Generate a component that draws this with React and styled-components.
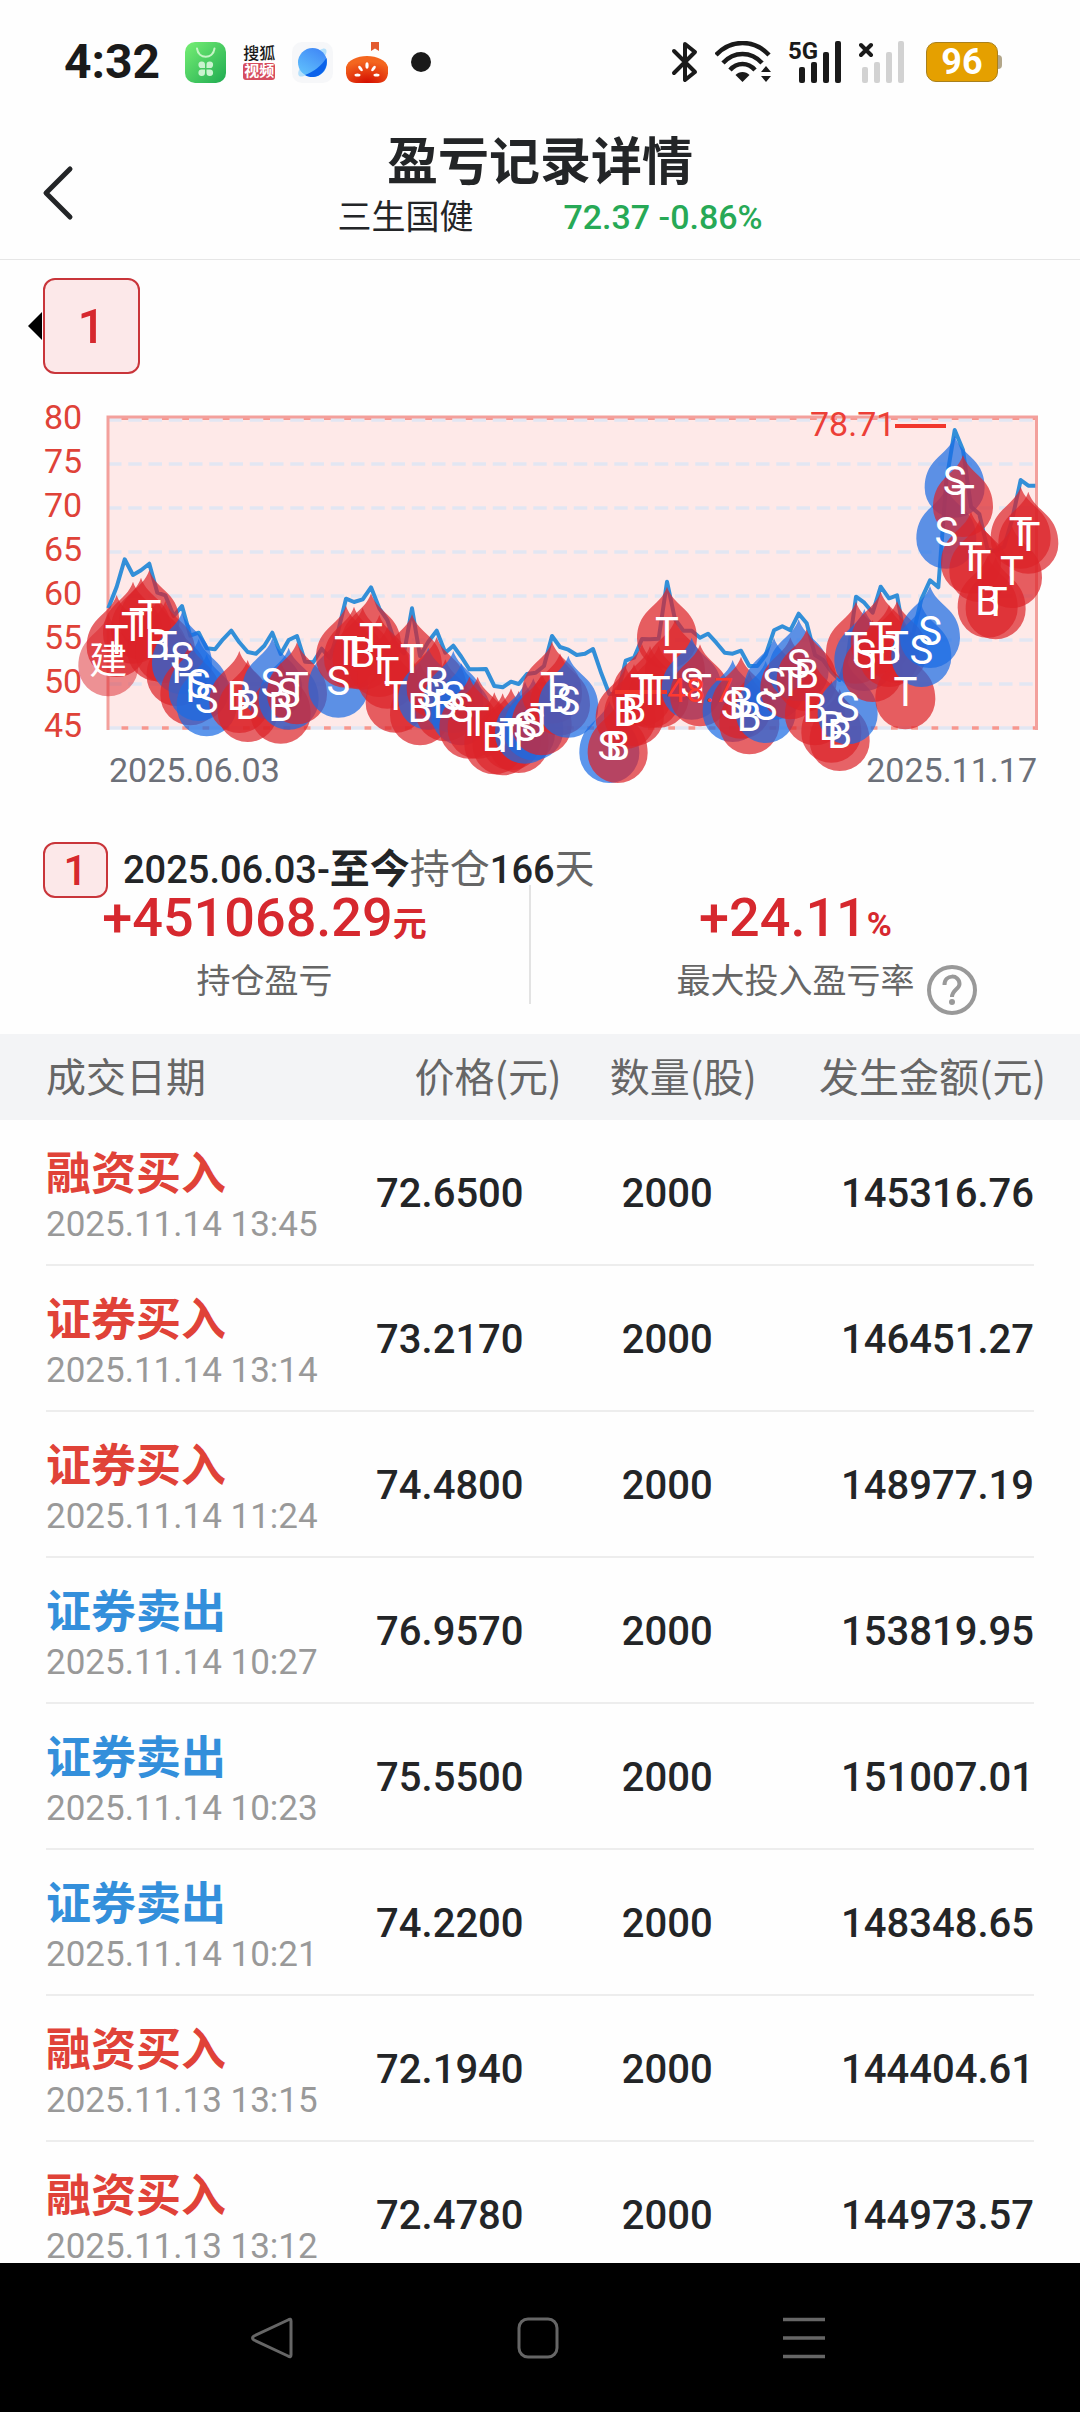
import React from "react";
import styled, { createGlobalStyle } from "styled-components";

const Global = createGlobalStyle`
  * { box-sizing: border-box; }
  body { margin: 0; background: #fdfdfd; }
  button { border: 0; padding: 0; background: none; font: inherit; color: inherit; cursor: pointer; }
  svg { display: block; }
`;

const Screen = styled.div`
  display: flex;
  flex-direction: column;
  width: 100%;
  height: 100vh;
  overflow: hidden;
  background: #fefefe;
  color: #232527;
  font-family: Roboto, "Noto Sans CJK SC", sans-serif;
`;

/* Status bar */
const StatusBar = styled.div`
  display: flex;
  align-items: center;
  justify-content: space-between;
  height: 124px;
  flex: none;
  padding: 0 78px 0 64px;
  color: #1a1a1a;
`;
const StatusGroup = styled.div`
  display: flex;
  align-items: center;
  gap: ${(p) => p.$gap}px;
`;
const Clock = styled.time`
  font-size: 48px;
  line-height: 56px;
  font-weight: 700;
  margin-right: 12px;
`;
const SohuIcon = styled.span`
  display: flex;
  flex-direction: column;
  align-items: center;
  width: 40px;
  font-size: 16px;
  line-height: 18px;
  font-weight: 500;
`;
const SohuTag = styled.span`
  padding: 0 1px;
  border-radius: 3px;
  background: #d64d5e;
  color: #fff;
  font-size: 15px;
  line-height: 17px;
  font-weight: 700;
`;
const Signal = styled.span`
  position: relative;
  display: block;
`;
const Generation = styled.span`
  position: absolute;
  left: 0;
  top: -2px;
  font-size: 24px;
  line-height: 24px;
  font-weight: 700;
`;
const Battery = styled.span`
  display: flex;
  align-items: center;
  margin-left: 4px;

  &::after {
    content: "";
    width: 4px;
    height: 14px;
    border-radius: 0 4px 4px 0;
    background: #b3a78a;
  }
`;
const BatteryLevel = styled.span`
  width: 72px;
  height: 40px;
  border: 1px solid #a9801c;
  border-radius: 10px;
  background: #e5a000;
  color: #fff;
  font-size: 36px;
  line-height: 38px;
  font-weight: 700;
  text-align: center;
`;

/* Header */
const Header = styled.header`
  display: grid;
  grid-template-columns: 110px 1fr 110px;
  flex: none;
  height: 136px;
  border-bottom: 1px solid #e6e6e6;
`;
const BackButton = styled.button`
  display: flex;
  align-items: center;
  padding: 3px 0 0 42px;
`;
const Heading = styled.div`
  display: flex;
  flex-direction: column;
  align-items: center;
  padding-top: 9px;
`;
const Title = styled.h1`
  margin: 0;
  font-size: 51px;
  line-height: 60px;
  font-weight: 700;
`;
const Quote = styled.p`
  display: flex;
  align-items: baseline;
  gap: 90px;
  margin: 0;
  padding-left: 20px;
  font-size: 34px;
  line-height: 48px;
`;
const Change = styled.span`
  color: #27a956;
  font-weight: 500;
`;

/* Chart */
const TabStrip = styled.div`
  display: flex;
  align-items: center;
  flex: none;
  padding: 18px 0 18px 28px;
`;
const Tab = styled.button`
  width: 97px;
  height: 96px;
  border: 2px solid #c9353a;
  border-radius: 12px;
  background: #fce8e9;
  color: #d6282e;
  font-size: 49px;
  font-weight: 500;
`;
const Chart = styled.svg`
  flex: none;
  width: 100%;
  height: auto;
`;

/* Position summary */
const Period = styled.div`
  display: flex;
  align-items: flex-start;
  flex: none;
  padding: 42px 43px 0;
  margin-bottom: -13px;
`;
const PeriodBadge = styled.span`
  width: 65px;
  height: 56px;
  border: 2px solid #c9353a;
  border-radius: 12px;
  background: #fce8e9;
  color: #d6282e;
  font-size: 42px;
  line-height: 54px;
  font-weight: 500;
  text-align: center;
`;
const PeriodText = styled.p`
  display: flex;
  align-items: baseline;
  margin: 0;
  padding-left: 15px;
  font-size: 38px;
  line-height: 56px;
  font-weight: 500;
`;
const Strong = styled.b`
  font-size: 40px;
  font-weight: 700;
`;
const Muted = styled.span`
  color: #666;
  font-size: 40px;
  font-weight: 400;
`;
const Stats = styled.section`
  display: grid;
  grid-template-columns: 1fr 2px 1fr;
  flex: none;
  height: 149px;
  padding-right: 20px;
`;
const Divider = styled.span`
  height: 119px;
  background: #e3e3e3;
`;
const Stat = styled.div`
  display: flex;
  flex-direction: column;
`;
const StatValue = styled.strong`
  color: #d6282e;
  font-size: 54px;
  line-height: 66px;
  font-weight: 500;
  text-align: center;
`;
const Unit = styled.span`
  font-size: 34px;
  font-weight: 700;
`;
const StatLabel = styled.div`
  display: grid;
  grid-template-columns: 1fr auto 1fr;
  gap: 12px;
  color: #666;
  font-size: 34px;
  line-height: 48px;
`;
const LabelText = styled.span`
  grid-column: 2;
`;
const HelpButton = styled.button`
  justify-self: start;
  align-self: start;
  padding-top: 8px;
`;

/* Trades */
const Trades = styled.main`
  flex: 1;
  min-height: 0;
  overflow: hidden;
`;
const Table = styled.table`
  width: 100%;
  table-layout: fixed;
  border-collapse: collapse;
`;
const Col = styled.col`
  width: ${(p) => p.$w}%;
`;
const HeadCell = styled.th`
  height: 86px;
  padding: 0 ${(p) => p.$end || 0}px 4px ${(p) => p.$start || 0}px;
  background: #f3f4f6;
  color: #666;
  font-family: "Noto Sans CJK SC", sans-serif;
  font-size: 40px;
  line-height: 60px;
  font-weight: 400;
  text-align: ${(p) => (p.$start ? "left" : "right")};
  white-space: nowrap;
`;
const Row = styled.tr`
  background: linear-gradient(#ededed, #ededed) 46px 100% / calc(100% - 92px) 2px no-repeat;
`;
const TypeCell = styled.td`
  height: 146px;
  padding: 8px 0 0 46px;
  white-space: nowrap;
`;
const TradeType = styled.div`
  color: ${(p) => (p.$sell ? "#338fdb" : "#e04238")};
  font-size: 45px;
  line-height: 56px;
  font-weight: 700;
`;
const TradeTime = styled.div`
  color: #999;
  font-size: 35px;
  line-height: 44px;
`;
const NumberCell = styled.td`
  padding: 2px ${(p) => p.$end}px 0 0;
  font-size: 40px;
  line-height: 48px;
  font-weight: 500;
  text-align: right;
`;

/* System navigation */
const NavBar = styled.nav`
  display: grid;
  grid-template-columns: repeat(3, 266px);
  justify-content: center;
  flex: none;
  height: 149px;
  padding-right: 4px;
  background: #000;
`;
const NavButton = styled.button`
  display: flex;
  align-items: center;
  justify-content: center;
`;

const trades = [
  ["融资买入", "2025.11.14 13:45", "72.6500", "2000", "145316.76"],
  ["证券买入", "2025.11.14 13:14", "73.2170", "2000", "146451.27"],
  ["证券买入", "2025.11.14 11:24", "74.4800", "2000", "148977.19"],
  ["证券卖出", "2025.11.14 10:27", "76.9570", "2000", "153819.95"],
  ["证券卖出", "2025.11.14 10:23", "75.5500", "2000", "151007.01"],
  ["证券卖出", "2025.11.14 10:21", "74.2200", "2000", "148348.65"],
  ["融资买入", "2025.11.13 13:15", "72.1940", "2000", "144404.61"],
  ["融资买入", "2025.11.13 13:12", "72.4780", "2000", "144973.57"],
];

/* Daily closes and trade marks, in thirds of a chart unit, measured from the chart's top edge */
const closes = [
  [325, 655], [350, 590], [374, 508], [399, 555], [423, 541], [448, 521], [472, 608], [496, 616],
  [521, 678], [546, 648], [571, 737], [596, 728], [620, 775], [645, 778], [669, 748], [694, 722],
  [718, 757], [743, 786], [768, 791], [793, 767], [817, 728], [842, 792], [866, 750], [891, 738],
  [915, 815], [940, 817], [965, 776], [990, 805], [1014, 725], [1038, 626], [1062, 636], [1088, 628],
  [1113, 592], [1138, 655], [1162, 690], [1187, 765], [1212, 790], [1236, 655], [1260, 798], [1285, 755],
  [1310, 722], [1336, 788], [1360, 767], [1384, 800], [1408, 838], [1433, 838], [1458, 837], [1483, 888],
  [1508, 892], [1533, 875], [1556, 882], [1581, 852], [1607, 848], [1632, 828], [1656, 738], [1680, 771],
  [1705, 779], [1730, 795], [1755, 791], [1779, 777], [1804, 850], [1828, 912], [1853, 912], [1877, 812],
  [1902, 803], [1926, 747], [1950, 748], [1976, 746], [2001, 575], [2025, 688], [2050, 722], [2075, 722],
  [2100, 743], [2124, 731], [2149, 758], [2174, 788], [2198, 791], [2223, 782], [2248, 828], [2272, 828],
  [2297, 795], [2322, 721], [2347, 709], [2371, 721], [2396, 671], [2420, 700], [2445, 795], [2469, 810],
  [2494, 845], [2519, 870], [2543, 800], [2568, 620], [2593, 638], [2618, 668], [2642, 590], [2667, 625],
  [2691, 616], [2716, 752], [2740, 730], [2764, 628], [2790, 571], [2815, 592], [2839, 273], [2864, 120],
  [2889, 180], [2913, 350], [2938, 372], [2963, 479], [2987, 484], [3012, 470], [3036, 390], [3062, 270],
  [3085, 287], [3106, 287],
];
const marks = [
  ["建", 325, 808], ["T", 350, 750], ["T", 399, 710], ["T", 423, 698], ["T", 448, 675], ["B", 472, 763],
  ["T", 496, 768], ["T", 530, 837], ["S", 546, 802], ["T", 571, 895], ["S", 596, 882], ["S", 620, 928],
  ["B", 718, 918], ["B", 743, 945], ["S", 817, 880], ["B", 842, 950], ["S", 866, 908], ["T", 891, 892],
  ["S", 1015, 872], ["T", 1038, 782], ["T", 1062, 785], ["B", 1088, 788], ["T", 1113, 745], ["T", 1138, 810],
  ["T", 1162, 845], ["T", 1187, 917], ["T", 1236, 808], ["B", 1260, 955], ["S", 1285, 908], ["B", 1310, 876],
  ["B", 1336, 943], ["S", 1360, 918], ["S", 1384, 955], ["T", 1408, 995], ["T", 1433, 995], ["B", 1483, 1042],
  ["T", 1508, 1045], ["T", 1533, 1030], ["T", 1556, 1038], ["S", 1575, 1010], ["S", 1600, 1000],
  ["T", 1625, 985], ["T", 1656, 890], ["B", 1680, 925], ["S", 1705, 932], ["S", 1828, 1068], ["B", 1853, 1068],
  ["B", 1877, 965], ["B", 1902, 957], ["T", 1926, 897], ["T", 1950, 903], ["T", 1976, 902], ["T", 2001, 725],
  ["T", 2025, 825], ["S", 2075, 878], ["T", 2100, 898], ["S", 2198, 945], ["B", 2223, 935], ["B", 2248, 982],
  ["S", 2297, 948], ["S", 2322, 878], ["T", 2371, 877], ["S", 2396, 823], ["B", 2420, 853], ["B", 2445, 955],
  ["B", 2494, 1007], ["B", 2519, 1032], ["S", 2543, 952], ["T", 2568, 770], ["S", 2593, 792], ["T", 2618, 825],
  ["T", 2642, 740], ["B", 2667, 780], ["T", 2691, 768], ["T", 2716, 907], ["S", 2764, 780], ["S", 2790, 723],
  ["S", 2839, 425], ["S", 2864, 272], ["T", 2889, 330], ["T", 2913, 500], ["T", 2938, 525], ["B", 2963, 632],
  ["T", 2987, 637], ["T", 3036, 543], ["T", 3062, 425], ["T", 3085, 440],
];
const DROP = "M0-45C3-35 11-29 19-21C26-14 30-5 30 7A30 30 0 0 1-30 7C-30-5-26-14-19-21C-11-29-3-35 0-45Z";
const levels = [80, 75, 70, 65, 60, 55, 50, 45];

function PriceChart() {
  const line = closes.map(([x, y]) => `${(x / 3).toFixed(1)},${(y / 3).toFixed(1)}`).join(" ");
  return (
    <Chart viewBox="0 2 1080 408" role="img" aria-label="盈亏走势" fontFamily='Roboto, "Noto Sans CJK SC", sans-serif'>
      <rect x="108" y="27" width="929" height="312" fill="#fee9e8" />
      {levels.map((v, i) => (
        <g key={v}>
          <line x1="108" x2="1036" y1={30 + i * 44} y2={30 + i * 44} stroke="#e2e6f2" strokeWidth="3.5" strokeDasharray="13.5 6.75" />
          <text x="44" y={39 + i * 44} fontSize="34" fill="#df4238">{v}</text>
        </g>
      ))}
      <line x1="121.5" x2="1036" y1="29" y2="29" stroke="#f6978f" strokeWidth="2" strokeDasharray="6.75 13.5" />
      <line x1="121.5" x2="1036" y1="338" y2="338" stroke="#f6978f" strokeWidth="3.5" strokeDasharray="6.75 13.5" />
      <path d="M108 340V27H1036.500V340" fill="none" stroke="#f3a09c" strokeWidth="3" />
      <polyline points={line} fill="none" stroke="#338fd8" strokeWidth="4" strokeLinejoin="round" />
      {marks.map(([kind, x, y]) => (
        <path
          key={x}
          d={DROP}
          transform={`translate(${x / 3} ${y / 3})`}
          fill={kind === "S" ? "#196be4" : "#dc2329"}
          fillOpacity={kind === "建" ? 0.5 : 0.71}
        />
      ))}
      <path d="M895 36H946M615 302H667" stroke="#f2372c" strokeWidth="4" />
      <g fill="#fff" textAnchor="middle">
        {marks.map(([kind, x, y]) => (
          <text key={x} x={x / 3} y={y / 3 + 14} fontSize={kind === "建" ? 38 : 40}>{kind}</text>
        ))}
      </g>
      <g fontSize="34">
        <text x="810" y="46" fill="#ec3f37">78.71</text>
        <text x="667" y="312" fill="#ff3a30">48.7</text>
      </g>
      <g fill="#6c7079" fontSize="34">
        <text x="109" y="392">2025.06.03</text>
        <text x="1037" y="392" textAnchor="end">2025.11.17</text>
      </g>
    </Chart>
  );
}

function StoreIcon() {
  return (
    <svg width="41" height="41" viewBox="0 0 41 41">
      <defs>
        <linearGradient id="store" x1="0" y1="0" x2="1" y2="1">
          <stop offset="0" stopColor="#76ef74" />
          <stop offset="1" stopColor="#1fab51" />
        </linearGradient>
      </defs>
      <rect width="41" height="41" rx="10" fill="url(#store)" />
      <path d="M12 6.500c1.500 11 16 11 17.500 0" fill="none" stroke="#c6f5c6" strokeWidth="2" strokeLinecap="round" />
      <g fill="#c9f3cf">
        <path d="M20 26h-3a3.300 3.300 0 1 1 3-3.300zM21.500 26h3a3.300 3.300 0 1 0-3-3.300zM20 27.500h-3a3.300 3.300 0 1 0 3 3.300zM21.500 27.500h3a3.300 3.300 0 1 1-3 3.300z" />
      </g>
    </svg>
  );
}

function BrowserIcon() {
  return (
    <svg width="41" height="41" viewBox="0 0 41 41">
      <defs>
        <linearGradient id="globe" x1=".8" y1="0" x2=".2" y2="1">
          <stop offset="0" stopColor="#3f86f6" />
          <stop offset="1" stopColor="#62c3fd" />
        </linearGradient>
      </defs>
      <rect width="41" height="41" rx="10" fill="#f6f7f9" />
      <path d="M28 8c6-4 9 0 4 8L14 33c-7 4-10 0-6-7z" fill="#b4e0fb" />
      <circle cx="20.500" cy="20.500" r="14.500" fill="url(#globe)" />
      <path d="M34.500 16C29 24 23 29 13 33c10 6 24-2 21.500-17z" fill="#0b62ea" />
    </svg>
  );
}

function TomatoIcon() {
  return (
    <svg width="42" height="41" viewBox="0 0 42 41">
      <defs>
        <radialGradient id="tomato" cx=".5" cy="1" r=".8">
          <stop offset="0" stopColor="#d40d00" />
          <stop offset="1" stopColor="#f4661f" />
        </radialGradient>
      </defs>
      <path d="M25 0h8v9l-4-2.500-4 2.500z" fill="#e35b2f" />
      <path d="M0 25C2 18 11 14 21 14s19 4 21 11c1 10-2 16-10 16H10C2 41-1 35 0 25z" fill="url(#tomato)" />
      <g fill="#fff">
        <ellipse cx="21" cy="23.500" rx="1.600" ry="3.200" />
        <ellipse cx="14.500" cy="26.500" rx="1.500" ry="3.200" transform="rotate(-35 14.500 26.500)" />
        <ellipse cx="27.500" cy="26.500" rx="1.500" ry="3.200" transform="rotate(35 27.500 26.500)" />
        <ellipse cx="11.500" cy="33" rx="3" ry="1.500" />
        <ellipse cx="30.500" cy="33" rx="3" ry="1.500" />
      </g>
    </svg>
  );
}

function Bars({ off }) {
  return (
    <svg width={off ? 46 : 54} height="42" viewBox={off ? "8 0 46 42" : "0 0 54 42"}>
      <g fill={off ? "#d2d2d2" : "#1a1a1a"}>
        <rect x="11" y="26" width="6" height="16" rx="2" />
        <rect x="23" y="21" width="6" height="21" rx="2" />
        <rect x="35" y="11" width="6" height="31" rx="2" />
        <rect x="47" y="0" width="6" height="42" rx="2" />
      </g>
      {off && <path d="M10 4L20 14M20 4L10 14" stroke="#1a1a1a" strokeWidth="4" strokeLinecap="round" />}
    </svg>
  );
}

export default function App() {
  return (
    <>
      <Global />
      <Screen>
        <StatusBar>
          <StatusGroup $gap={13}>
            <Clock>4:32</Clock>
            <StoreIcon />
            <SohuIcon>
              搜狐<SohuTag>视频</SohuTag>
            </SohuIcon>
            <BrowserIcon />
            <TomatoIcon />
            <svg width="32" height="20" viewBox="0 0 32 20">
              <circle cx="20" cy="10" r="10" fill="#1a1a1a" />
            </svg>
          </StatusGroup>
          <StatusGroup $gap={17}>
            <svg width="27" height="42" viewBox="0 0 27 42" fill="none" stroke="#1a1a1a" strokeWidth="4" strokeLinecap="round" strokeLinejoin="round">
              <path d="M3 10L24 31L14 39V3L24 11L3 32" />
            </svg>
            <svg width="56" height="42" viewBox="0 0 56 42" fill="none" stroke="#1a1a1a" strokeWidth="4.500">
              <path d="M1 14C16-2 39-2 54 14M8 22C19 10 36 10 47 22M15 29C22 21 33 21 40 29" />
              <path d="M27.500 41L20.500 34C24 30 31 30 34.500 34Z" fill="#1a1a1a" stroke="none" />
              <path d="M51 25L56 31H46ZM51 41L56 35H46Z" fill="#1a1a1a" stroke="none" />
            </svg>
            <Signal>
              <Generation>5G</Generation>
              <Bars />
            </Signal>
            <Bars off />
            <Battery>
              <BatteryLevel>96</BatteryLevel>
            </Battery>
          </StatusGroup>
        </StatusBar>

        <Header>
          <BackButton aria-label="返回">
            <svg width="32" height="56" viewBox="0 0 32 56" fill="none" stroke="#232527" strokeWidth="5" strokeLinecap="round" strokeLinejoin="round">
              <path d="M28 4L4 28L28 52" />
            </svg>
          </BackButton>
          <Heading>
            <Title>盈亏记录详情</Title>
            <Quote>
              <span>三生国健</span>
              <Change>72.37 -0.86%</Change>
            </Quote>
          </Heading>
        </Header>

        <TabStrip>
          <svg width="15" height="28" viewBox="0 0 15 28">
            <path d="M14 0V28L0 14Z" />
          </svg>
          <Tab>1</Tab>
        </TabStrip>
        <PriceChart />

        <Period>
          <PeriodBadge>1</PeriodBadge>
          <PeriodText>
            2025.06.03-<Strong>至今</Strong>
            <Muted>持仓</Muted>166<Muted>天</Muted>
          </PeriodText>
        </Period>
        <Stats>
          <Stat>
            <StatValue>
              +451068.29<Unit>元</Unit>
            </StatValue>
            <StatLabel>
              <LabelText>持仓盈亏</LabelText>
            </StatLabel>
          </Stat>
          <Divider />
          <Stat>
            <StatValue>
              +24.11<Unit>%</Unit>
            </StatValue>
            <StatLabel>
              <LabelText>最大投入盈亏率</LabelText>
              <HelpButton aria-label="说明">
                <svg width="50" height="50" viewBox="0 0 50 50" fill="none" stroke="#999" strokeWidth="4">
                  <circle cx="25" cy="25" r="23" />
                  <path d="M17.500 20C17.500 9 32.500 9 32.500 19C32.500 24 25 25 25 32" />
                  <circle cx="25" cy="37" r="3" fill="#999" stroke="none" />
                </svg>
              </HelpButton>
            </StatLabel>
          </Stat>
        </Stats>

        <Trades>
          <Table>
            <colgroup>
              <Col $w={31} />
              <Col $w={21} />
              <Col $w={19} />
              <Col $w={29} />
            </colgroup>
            <thead>
              <tr>
                <HeadCell $start={46}>成交日期</HeadCell>
                <HeadCell>价格(元)</HeadCell>
                <HeadCell $end={10}>数量(股)</HeadCell>
                <HeadCell $end={34}>发生金额(元)</HeadCell>
              </tr>
            </thead>
            <tbody>
              {trades.map(([type, time, price, count, amount]) => (
                <Row key={time}>
                  <TypeCell>
                    <TradeType $sell={type.endsWith("卖出")}>{type}</TradeType>
                    <TradeTime>{time}</TradeTime>
                  </TypeCell>
                  <NumberCell $end={38}>{price}</NumberCell>
                  <NumberCell $end={54}>{count}</NumberCell>
                  <NumberCell $end={46}>{amount}</NumberCell>
                </Row>
              ))}
            </tbody>
          </Table>
        </Trades>

        <NavBar>
          <NavButton aria-label="后退">
            <svg width="42" height="42" viewBox="0 0 42 42" fill="none" stroke="#666" strokeWidth="3" strokeLinejoin="round">
              <path d="M40 4V38Q40 41 37 39L3 23Q0 21 3 19L37 3Q40 1 40 4Z" />
            </svg>
          </NavButton>
          <NavButton aria-label="主页">
            <svg width="42" height="42" viewBox="0 0 42 42" fill="none" stroke="#666" strokeWidth="3">
              <rect x="2" y="2" width="38" height="38" rx="9" />
            </svg>
          </NavButton>
          <NavButton aria-label="最近任务">
            <svg width="42" height="42" viewBox="0 0 42 42" stroke="#666" strokeWidth="3.500">
              <path d="M0 2.500H42M0 21H42M0 39.500H42" />
            </svg>
          </NavButton>
        </NavBar>
      </Screen>
    </>
  );
}
